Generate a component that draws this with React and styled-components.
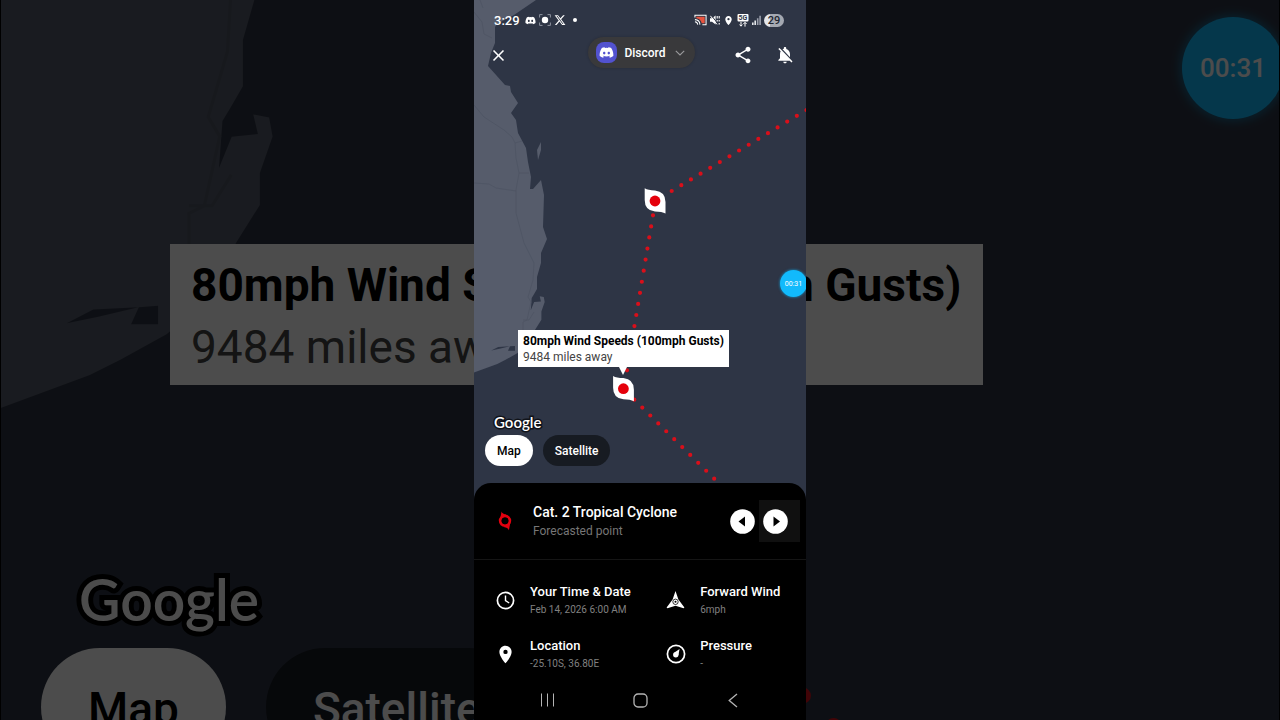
import React from "react";
import styled, { createGlobalStyle, css } from "styled-components";
import { FaDiscord, FaXTwitter } from "react-icons/fa6";
import {
  MdClose,
  MdLocationOn,
  MdNotificationsOff,
  MdShare,
} from "react-icons/md";

const GlobalStyle = createGlobalStyle`
  *, *::before, *::after { box-sizing: border-box; }
  body {
    margin: 0;
    background: #0e1015;
    color: #fff;
    font-family: Roboto, "Liberation Sans", sans-serif;
  }
  button { font: inherit; color: inherit; border: 0; padding: 0; background: none; cursor: pointer; }
  svg { display: block; flex: none; }
`;

/* ---------- stage ---------- */

const Stage = styled.main`
  position: relative;
  min-height: 100vh;
  display: flex;
  justify-content: center;
  overflow: hidden;
`;

const Backdrop = styled.div`
  position: absolute;
  inset: 0;
  overflow: hidden;
`;

const Shade = styled.div`
  position: absolute;
  inset: 0;
  background: rgba(0, 0, 0, 0.7);
  border-left: 1px solid #000;
  border-right: 1px solid #000;
`;

const Phone = styled.section`
  position: relative;
  width: 100%;
  max-width: 332px;
  min-height: 100vh;
  display: flex;
  flex-direction: column;
  overflow: hidden;
  background: #2e3545;
`;

const MapSvg = styled.svg`
  position: absolute;
  inset: 0;
  width: 100%;
  height: 100%;
`;

/* ---------- map overlays, in a small and a large edition ---------- */

const Callout = styled.div`
  position: absolute;
  white-space: nowrap;
  background: #fff;
  color: #000;
  ${({ $large }) =>
    $large
      ? css`
          left: 170px;
          top: 244px;
          width: 813px;
          height: 141px;
          padding: 10px 21px;
          font-size: 46px;
          line-height: 62px;
        `
      : css`
          left: 44px;
          top: 330px;
          width: 211px;
          height: 37px;
          padding: 3px 5px;
          font-size: 12px;
          line-height: 16px;
          &::after {
            content: "";
            position: absolute;
            left: 101px;
            top: 100%;
            border: 4px solid transparent;
            border-top: 8px solid #fff;
            border-bottom: 0;
          }
        `}
`;

const CalloutTitle = styled.div`
  font-weight: 700;
`;

const CalloutText = styled.div`
  color: #444;
`;

const Timer = styled.div`
  position: absolute;
  display: flex;
  align-items: center;
  justify-content: center;
  border-radius: 50%;
  background: #12bafc;
  color: #fff;
  ${({ $large }) =>
    $large
      ? css`
          right: -4px;
          top: 17px;
          width: 102px;
          height: 102px;
          font-size: 26px;
          font-weight: 500;
          box-shadow: 0 0 8px 3px rgba(18, 150, 205, 0.5);
        `
      : css`
          right: -1px;
          top: 270px;
          width: 27px;
          height: 27px;
          font-size: 7px;
          box-shadow: 0 0 2px 1px rgba(18, 150, 205, 0.5);
        `}
`;

const Wordmark = styled.div`
  font-family: Lato, sans-serif;
  font-weight: 600;
  paint-order: stroke fill;
  color: #fff;
  ${({ $large }) =>
    $large
      ? css`
          font-size: 57px;
          line-height: 72px;
          -webkit-text-stroke: 10px #000;
        `
      : css`
          font-size: 15px;
          line-height: 20px;
          -webkit-text-stroke: 3px #10131a;
        `}
`;

const MapFooter = styled.div`
  display: flex;
  flex-direction: column;
  ${({ $large }) =>
    $large
      ? css`
          position: absolute;
          left: 41px;
          top: 563px;
          gap: 13px;
        `
      : css`
          position: relative;
          margin-top: auto;
          padding: 0 10px 17px 11px;
          gap: 3px;
        `}
`;

const WordmarkRow = styled.div`
  padding-left: ${({ $large }) => ($large ? "38px" : "9px")};
`;

const Switcher = styled.div`
  display: flex;
  gap: ${({ $large }) => ($large ? "40px" : "10px")};
`;

const pill = css`
  display: flex;
  align-items: center;
  border-radius: 999px;
  font-weight: 500;
  background: ${({ $on }) => ($on ? "#fff" : "#171b22")};
  color: ${({ $on }) => ($on ? "#000" : "#fff")};
`;

const MapTypeButton = styled.button`
  ${pill}
  height: 31px;
  padding: 0 12px;
  font-size: 12px;
`;

const LargePill = styled.div`
  ${pill}
  height: 118px;
  padding: 4px 47px 0;
  font-size: 46px;
`;

/* ---------- phone top ---------- */

const StatusBar = styled.header`
  position: relative;
  display: flex;
  align-items: center;
  height: 36px;
  padding: 4px 22px 0 20px;
`;

const Clock = styled.time`
  font-size: 13px;
  font-weight: 500;
  margin-right: 5px;
`;

const StatusGroup = styled.div`
  display: flex;
  align-items: center;
  gap: 3px;
  margin-left: ${({ $end }) => ($end ? "auto" : "0")};
`;

const Bullet = styled.span`
  width: 4px;
  height: 4px;
  margin-left: 4px;
  border-radius: 50%;
  background: #fff;
`;

const Battery = styled.span`
  width: 20px;
  height: 13px;
  border-radius: 7px;
  background: linear-gradient(90deg, #e4e6ea 30%, #a4a8b1 30%);
  color: #20242e;
  font-size: 11px;
  font-weight: 500;
  line-height: 13px;
  text-align: center;
`;

const AppBar = styled.div`
  position: relative;
  display: grid;
  grid-template-columns: 1fr auto 1fr;
  align-items: start;
  padding: 1px 10px 0 13px;
`;

const IconButton = styled.button`
  width: 22px;
  height: 36px;
  display: flex;
  align-items: center;
  justify-content: center;
`;

const Actions = styled.div`
  display: flex;
  justify-content: flex-end;
  gap: 20px;
`;

const AppPill = styled.button`
  display: flex;
  align-items: center;
  height: 31px;
  padding: 0 10px 0 8px;
  border-radius: 16px;
  background: #39393b;
  font-size: 12px;
  font-weight: 500;
  box-shadow: 0 0 3px rgba(0, 0, 0, 0.2);
`;

const AppBadge = styled.span`
  width: 21px;
  height: 21px;
  margin-right: 7px;
  display: flex;
  align-items: center;
  justify-content: center;
  border-radius: 8px;
  background: #5252cf;
`;

const AppName = styled.span`
  margin-right: 9px;
`;

/* ---------- sheet ---------- */

const Sheet = styled.section`
  position: relative;
  border-radius: 17px 17px 0 0;
  background: #000;
`;

const SheetHeader = styled.div`
  display: flex;
  align-items: center;
  height: 77px;
  padding: 0 6px 0 23px;
  border-bottom: 1px solid #151515;
`;

const SheetText = styled.div`
  flex: 1;
  margin-left: 20px;
`;

const SheetTitle = styled.h1`
  margin: 0;
  font-size: 14px;
  line-height: 20px;
  font-weight: 500;
`;

const SheetSubtitle = styled.p`
  margin: 0;
  font-size: 12px;
  line-height: 18px;
  color: #767676;
`;

const StepButton = styled.button`
  width: ${({ $active }) => ($active ? "41px" : "29px")};
  height: 42px;
  padding-left: ${({ $active }) => ($active ? "4px" : "0")};
  display: flex;
  align-items: center;
  background: ${({ $active }) => ($active ? "#101010" : "transparent")};
`;

const Facts = styled.dl`
  margin: 0;
  padding: 22px 0 8px 20px;
  display: grid;
  grid-template-columns: 6fr 5fr;
  row-gap: 18px;
`;

const Fact = styled.div`
  display: grid;
  grid-template-columns: 23px 1fr;
  column-gap: 13px;
  align-items: center;
`;

const FactIcon = styled.span`
  grid-row: 1 / 3;
  display: flex;
  justify-content: center;
`;

const FactName = styled.dt`
  font-size: 13px;
  line-height: 20px;
  font-weight: 500;
`;

const FactValue = styled.dd`
  margin: 0;
  font-size: 10px;
  line-height: 16px;
  color: #808080;
`;

const NavBar = styled.nav`
  height: 40px;
  padding: 0 62px;
  display: flex;
  align-items: center;
  justify-content: space-between;
`;

const NavButton = styled.button`
  width: 22px;
  height: 32px;
  display: flex;
  align-items: center;
  justify-content: center;
`;

/* ---------- drawings ---------- */

const LAND =
  "M0 0H62L40 15L23 24L21 27V43L17 53L14 66L31 85L36 86L37 92L44 103L37 113L42 120L44 133L52 148L54 162L57 177L56 189H59L67 180L70 195L69 227L73 239L67 253V263L63 277V289L59.7 294.7L57.7 298L56.8 310.2L60.1 302.1L66.9 301.4L65.7 296.3L69.8 297.1L70.7 302L67.4 311.5V319.8L61.4 329.3L52 346L43.2 353.3L31.1 360L23.3 363.9L0 372.5Z";

const ROADS =
  "M0 105L10 117L30 130L38 137L41 143L42 158L45 173L42 190V213L50 243L60 263L59 280L54 297L57 302L53 320L49 322V333M41 143L48 141M45 173H55M0 183L15 184L22 188L42 191M0 12L8 22L10 34L18 38M6 0L9 8M60 312L55 320H49";

function Pin({ x, y }) {
  return (
    <g transform={`translate(${x} ${y})`}>
      <path
        d="M-10.3-12.7Q-7-10.6 0-10.6Q10.5-9.5 10.5 1V12.6Q7 10.6 0 10.6Q-10.3 9.5-10.3-1Z"
        fill="#fff"
      />
      <circle r="5.4" fill="#e5000b" />
    </g>
  );
}

function CycloneMap() {
  return (
    <MapSvg viewBox="0 0 332 720" preserveAspectRatio="xMidYMid slice" aria-hidden="true">
      <rect width="332" height="720" fill="#2e3545" />
      <path d={LAND} fill="#565c6b" />
      <path d="M67 142V150L64 160L63 150Z" fill="#565c6b" />
      <path
        d="M17.3 350.5L24.2 346.9L35.9 346.3L25.5 348.8ZM36 346.3L41 345.9V350.7H34Z"
        fill="#2e3545"
      />
      <path d={ROADS} fill="none" stroke="#4e5463" strokeWidth="0.8" />
      <g
        fill="none"
        stroke="#d90f1a"
        strokeWidth="4.2"
        strokeLinecap="round"
        strokeDasharray="0 11.23"
      >
        <path d="M197.7 191L333 109.7" />
        <path d="M179 215.3L152.9 371" />
        <path d="M160.3 399.7L320 557.5" />
      </g>
      <Pin x={181} y={201} />
      <Pin x={149.4} y={388.7} />
    </MapSvg>
  );
}

function CaptureIcon() {
  return (
    <svg width="12" height="12" viewBox="0 0 12 12">
      <circle cx="6" cy="6" r="3.2" fill="#fff" />
      <path
        d="M.6 3.5V.6H3.5M8.5.6h2.9V3.5M11.4 8.5v2.9H8.5M3.5 11.4H.6V8.5"
        fill="none"
        stroke="#8d929e"
        strokeWidth="1"
      />
    </svg>
  );
}

function CastIcon() {
  return (
    <svg width="13" height="12" viewBox="0 0 14 12">
      <path d="M2.5 2.5h9v7H8.3Q7.2 4.6 2.5 4.2Z" fill="#e8543f" />
      <path
        d="M1 3.3V1h12v10H9M1 5.6Q6.2 5.8 6.4 11M1 8Q3.8 8.2 4 11"
        fill="none"
        stroke="#fff"
        strokeWidth="1.1"
      />
    </svg>
  );
}

function MuteIcon() {
  return (
    <svg width="10" height="10" viewBox="0 0 10 10">
      <path d="M0 3.3H2L5.6.4V9.6L2 6.7H0Z" fill="#fff" />
      <path d="M1.6.7L7.4 8.2" stroke="#2e3545" strokeWidth="1" />
      <path d="M.4.8L7 9.4" stroke="#fff" strokeWidth="1" />
      <path d="M7.2 1v2.4M9.2 1v2.4M7.2 5v1.6M9.2 5v1.6M9.2 8v1.4" stroke="#fff" strokeWidth="1.1" />
    </svg>
  );
}

function NetworkIcon() {
  return (
    <svg width="12" height="13" viewBox="0 0 12 13">
      <rect x=".5" y="0" width="11" height="7.4" rx="1" fill="#fff" />
      <text
        x="6"
        y="6.2"
        textAnchor="middle"
        fontFamily="Roboto, sans-serif"
        fontSize="7"
        fontWeight="700"
        fill="#2e3545"
      >
        5G
      </text>
      <path
        d="M4 8v4M2.6 10.6L4 12.2L5.4 10.6M8 12.6V8.4M6.4 10L8 8.4L9.6 10"
        fill="none"
        stroke="#fff"
        strokeWidth="1"
      />
    </svg>
  );
}

function SignalIcon() {
  return (
    <svg width="9" height="10" viewBox="0 0 9 10">
      <path d="M.8 10V7.4M3.2 10V5.4" stroke="#e4e6ea" strokeWidth="1.6" />
      <path d="M5.7 10V3.2M8.1 10V.8" stroke="#9a9eaa" strokeWidth="1.6" />
    </svg>
  );
}

function ChevronIcon() {
  return (
    <svg width="10" height="6" viewBox="0 0 10 6">
      <path d="M.8.8L5 5L9.2.8" fill="none" stroke="#9a9a9c" strokeWidth="1.1" />
    </svg>
  );
}

function CycloneIcon() {
  return (
    <svg width="16" height="20" viewBox="0 0 16 20">
      <circle cx="8" cy="9.8" r="4.8" fill="none" stroke="#e3000f" strokeWidth="2.8" />
      <path
        d="M4.6.6Q5.4 3.2 9.2 3.6L3 8.4ZM11.9 19.2Q10.8 16.6 6.8 16L13.4 11.2Z"
        fill="#e3000f"
      />
      <circle cx="8" cy="9.8" r="3.4" fill="#000" />
    </svg>
  );
}

function StepIcon({ back }) {
  return (
    <svg width="25" height="25" viewBox="0 0 25 25">
      <circle cx="12.5" cy="12.5" r="12.3" fill="#fff" />
      <path d={back ? "M15 7.5V17.5L8.5 12.5Z" : "M10.5 7.5V17.5L17 12.5Z"} fill="#000" />
    </svg>
  );
}

function ClockIcon() {
  return (
    <svg width="19" height="19" viewBox="0 0 19 19" fill="none" stroke="#fff">
      <circle cx="9.5" cy="9.5" r="8.1" strokeWidth="1.7" />
      <path d="M9.5 4.6V9.7L13.2 12" strokeWidth="1.4" />
    </svg>
  );
}

function WindIcon() {
  return (
    <svg width="19" height="18" viewBox="0 0 19 18">
      <path d="M9.5 0L12.4 8.6L18.4 16.4L17.6 17.2L9.5 14.8L1.4 17.2L.6 16.4L6.6 8.6Z" fill="#fff" />
      <circle cx="9.5" cy="10.8" r="2.7" fill="#fff" stroke="#000" strokeWidth=".8" />
      <circle cx="9.5" cy="10.8" r="1" fill="#000" />
    </svg>
  );
}

function GaugeIcon() {
  return (
    <svg width="20" height="20" viewBox="0 0 20 20">
      <circle cx="10" cy="10" r="8.6" fill="none" stroke="#fff" strokeWidth="1.7" />
      <circle cx="9.8" cy="10.8" r="2.7" fill="#fff" />
      <path d="M13.6 5L12.4 11.2L8.4 8.6Z" fill="#fff" />
    </svg>
  );
}

function RecentsIcon() {
  return (
    <svg width="14" height="14" viewBox="0 0 14 14">
      <path d="M1.5.5V13.5M7.5.5V13.5M13.5.5V13.5" stroke="#b4b4b4" strokeWidth="1" />
    </svg>
  );
}

function HomeIcon() {
  return (
    <svg width="15" height="15" viewBox="0 0 15 15">
      <rect x="1" y="1" width="13" height="13" rx="4" fill="none" stroke="#b4b4b4" strokeWidth="1.3" />
    </svg>
  );
}

function BackIcon() {
  return (
    <svg width="10" height="15" viewBox="0 0 10 15">
      <path d="M9 1L1.2 7.5L9 14" fill="none" stroke="#b4b4b4" strokeWidth="1.3" />
    </svg>
  );
}

/* ---------- page ---------- */

const FACTS = [
  { name: "Your Time & Date", value: "Feb 14, 2026 6:00 AM", icon: <ClockIcon /> },
  { name: "Forward Wind", value: "6mph", icon: <WindIcon /> },
  { name: "Location", value: "-25.10S, 36.80E", icon: <MdLocationOn size={21} /> },
  { name: "Pressure", value: "-", icon: <GaugeIcon /> },
];

function WindCallout({ large }) {
  return (
    <Callout $large={large}>
      <CalloutTitle>80mph Wind Speeds (100mph Gusts)</CalloutTitle>
      <CalloutText>9484 miles away</CalloutText>
    </Callout>
  );
}

function MapBackdrop() {
  return (
    <Backdrop aria-hidden="true">
      <CycloneMap />
      <WindCallout large />
      <MapFooter $large>
        <WordmarkRow $large>
          <Wordmark $large>Google</Wordmark>
        </WordmarkRow>
        <Switcher $large>
          <LargePill $on>Map</LargePill>
          <LargePill>Satellite</LargePill>
        </Switcher>
      </MapFooter>
      <Timer $large>00:31</Timer>
      <Shade />
    </Backdrop>
  );
}

export default function App() {
  return (
    <Stage>
      <GlobalStyle />
      <MapBackdrop />
      <Phone>
        <CycloneMap />
        <StatusBar>
          <Clock>3:29</Clock>
          <StatusGroup>
            <FaDiscord size={11} />
            <CaptureIcon />
            <FaXTwitter size={12} />
            <Bullet />
          </StatusGroup>
          <StatusGroup $end>
            <CastIcon />
            <MuteIcon />
            <MdLocationOn size={11} />
            <NetworkIcon />
            <SignalIcon />
            <Battery>29</Battery>
          </StatusGroup>
        </StatusBar>
        <AppBar>
          <IconButton aria-label="Close">
            <MdClose size={19} />
          </IconButton>
          <AppPill>
            <AppBadge>
              <FaDiscord size={15} />
            </AppBadge>
            <AppName>Discord</AppName>
            <ChevronIcon />
          </AppPill>
          <Actions>
            <IconButton aria-label="Share">
              <MdShare size={20} />
            </IconButton>
            <IconButton aria-label="Notifications off">
              <MdNotificationsOff size={20} />
            </IconButton>
          </Actions>
        </AppBar>
        <WindCallout />
        <Timer>00:31</Timer>
        <MapFooter>
          <WordmarkRow>
            <Wordmark>Google</Wordmark>
          </WordmarkRow>
          <Switcher>
            <MapTypeButton $on aria-pressed="true">Map</MapTypeButton>
            <MapTypeButton aria-pressed="false">Satellite</MapTypeButton>
          </Switcher>
        </MapFooter>
        <Sheet>
          <SheetHeader>
            <CycloneIcon />
            <SheetText>
              <SheetTitle>Cat. 2 Tropical Cyclone</SheetTitle>
              <SheetSubtitle>Forecasted point</SheetSubtitle>
            </SheetText>
            <StepButton aria-label="Previous point">
              <StepIcon back />
            </StepButton>
            <StepButton $active aria-label="Next point">
              <StepIcon />
            </StepButton>
          </SheetHeader>
          <Facts>
            {FACTS.map((fact) => (
              <Fact key={fact.name}>
                <FactIcon>{fact.icon}</FactIcon>
                <FactName>{fact.name}</FactName>
                <FactValue>{fact.value}</FactValue>
              </Fact>
            ))}
          </Facts>
          <NavBar aria-label="System">
            <NavButton aria-label="Recent apps">
              <RecentsIcon />
            </NavButton>
            <NavButton aria-label="Home">
              <HomeIcon />
            </NavButton>
            <NavButton aria-label="Back">
              <BackIcon />
            </NavButton>
          </NavBar>
        </Sheet>
      </Phone>
    </Stage>
  );
}
